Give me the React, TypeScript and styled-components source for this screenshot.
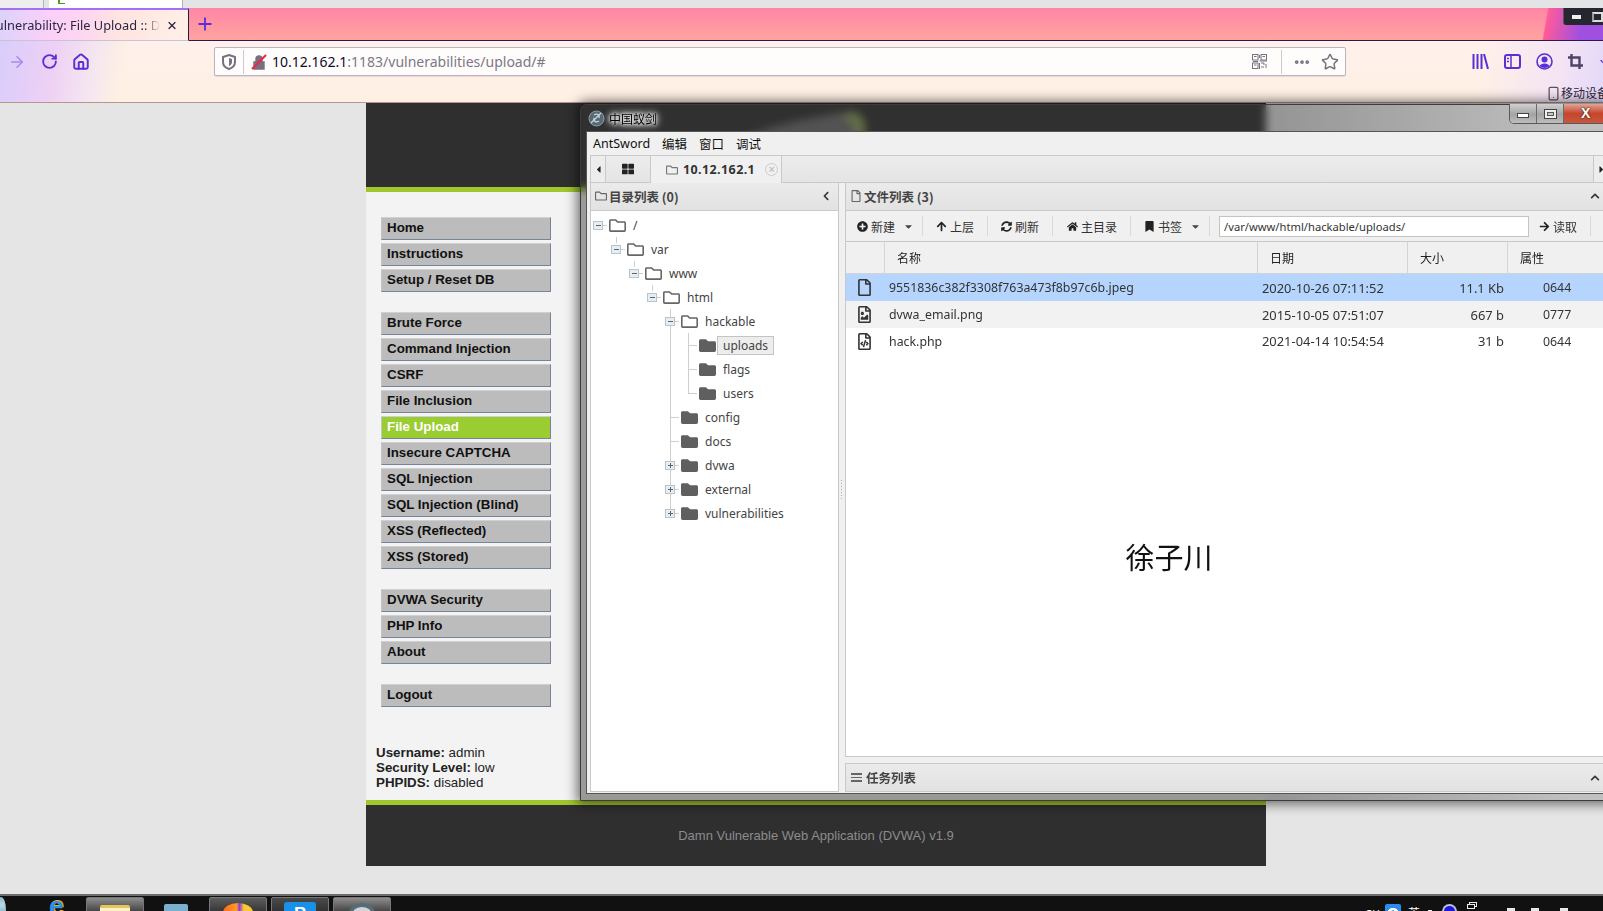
import { ReactNode } from 'react'
import styled, { createGlobalStyle } from 'styled-components'
import {
  FaArrowRight,
  FaArrowUp,
  FaBookmark,
  FaCaretDown,
  FaCaretLeft,
  FaCaretRight,
  FaChevronLeft,
  FaChevronUp,
  FaFolder,
  FaHome,
  FaPlusCircle,
  FaRegFile,
  FaRegFileCode,
  FaRegFileImage,
  FaRegFolder,
  FaSyncAlt,
  FaThLarge,
} from 'react-icons/fa'
import { ArrowRight, ChevronDown, Home, MoreHorizontal, RotateCw, Star, X, Plus, Smartphone } from 'lucide-react'

const uiFont = `"Noto Sans", "Noto Sans CJK SC", sans-serif`
const cjkFont = `"Noto Sans CJK SC", "Noto Sans", sans-serif`
const webFont = `"Liberation Sans", Arial, sans-serif`

const menuGroups = [
  ['Home', 'Instructions', 'Setup / Reset DB'],
  [
    'Brute Force',
    'Command Injection',
    'CSRF',
    'File Inclusion',
    'File Upload',
    'Insecure CAPTCHA',
    'SQL Injection',
    'SQL Injection (Blind)',
    'XSS (Reflected)',
    'XSS (Stored)',
  ],
  ['DVWA Security', 'PHP Info', 'About'],
  ['Logout'],
]

interface ITreeNode {
  name: string
  level: number
  state: 'open' | 'closed' | 'leaf'
  guides: number[]
  last?: boolean
  selected?: boolean
}

const tree: ITreeNode[] = [
  { name: '/', level: 0, state: 'open', guides: [] },
  { name: 'var', level: 1, state: 'open', guides: [] },
  { name: 'www', level: 2, state: 'open', guides: [] },
  { name: 'html', level: 3, state: 'open', guides: [] },
  { name: 'hackable', level: 4, state: 'open', guides: [4] },
  { name: 'uploads', level: 5, state: 'leaf', guides: [4, 5], selected: true },
  { name: 'flags', level: 5, state: 'leaf', guides: [4, 5] },
  { name: 'users', level: 5, state: 'leaf', guides: [4, 5], last: true },
  { name: 'config', level: 4, state: 'leaf', guides: [4] },
  { name: 'docs', level: 4, state: 'leaf', guides: [4] },
  { name: 'dvwa', level: 4, state: 'closed', guides: [4] },
  { name: 'external', level: 4, state: 'closed', guides: [4] },
  { name: 'vulnerabilities', level: 4, state: 'closed', guides: [4], last: true },
]

const files = [
  { icon: <FaRegFile />, name: '9551836c382f3308f763a473f8b97c6b.jpeg', date: '2020-10-26 07:11:52', size: '11.1 Kb', attr: '0644' },
  { icon: <FaRegFileImage />, name: 'dvwa_email.png', date: '2015-10-05 07:51:07', size: '667 b', attr: '0777' },
  { icon: <FaRegFileCode />, name: 'hack.php', date: '2021-04-14 10:54:54', size: '31 b', attr: '0644' },
]

const TreeGuide = ({ node }: { node: ITreeNode }) => {
  const cx = node.level * 18 + 9
  const width = (node.level + 1) * 18
  return (
    <svg width={width} height={24} style={{ flex: 'none' }}>
      {node.guides
        .filter((g) => g < node.level)
        .map((g) => (
          <line key={g} x1={g * 18 + 9.5} x2={g * 18 + 9.5} y1={-1} y2={24} stroke="#cfcfcf" />
        ))}
      {node.level > 0 && node.guides.includes(node.level) && (
        <line x1={cx + 0.5} x2={cx + 0.5} y1={0} y2={node.last ? 12 : 24} stroke="#cfcfcf" />
      )}
      {node.level > 0 && !node.guides.includes(node.level) && (
        <line x1={cx + 0.5} x2={cx + 0.5} y1={-4} y2={6} stroke="#cfcfcf" />
      )}
      {node.state === 'open' && node.name === 'hackable' && (
        <line x1={cx + 0.5} x2={cx + 0.5} y1={0} y2={24} stroke="#cfcfcf" />
      )}
      <line x1={cx} x2={cx + 10} y1={12.5} y2={12.5} stroke="#cfcfcf" />
      {node.state !== 'leaf' && (
        <g>
          <rect x={cx - 4.5} y={8.5} width={9} height={8} fill="#e6eef3" stroke="#b9c4cc" />
          <line x1={cx - 2} x2={cx + 3} y1={12.5} y2={12.5} stroke="#5b6770" />
          {node.state === 'closed' && <line x1={cx + 0.5} x2={cx + 0.5} y1={10} y2={15} stroke="#5b6770" />}
        </g>
      )}
    </svg>
  )
}

const ToolItem = ({ icon, children, caret }: { icon: ReactNode; children: ReactNode; caret?: boolean }) => (
  <ToolButton>
    {icon}
    <span>{children}</span>
    {caret && <CaretSlot><FaCaretDown /></CaretSlot>}
  </ToolButton>
)

const App = () => {
  return (
    <Screen>
      <GlobalStyle />
      <TopStrip>
        <OldTab $width={44} />
        <StripGap />
        <WhiteTab>
          <TabFavicon />
        </WhiteTab>
      </TopStrip>
      <TabBar>
        <ActiveTab>
          <TabTitle>Vulnerability: File Upload :: D</TabTitle>
          <X size={15} strokeWidth={2.4} color="#2a2540" />
        </ActiveTab>
        <NewTab>
          <Plus size={20} strokeWidth={2.2} color="#5b2fd6" />
        </NewTab>
        <TopRightControls>
          <MinIcon />
          <RestoreIcon />
        </TopRightControls>
      </TabBar>
      <NavBar>
        <NavIcons>
          <ArrowRight size={18} color="#a78ae8" strokeWidth={2} />
          <RotateCw size={17} color="#5b2fd6" strokeWidth={2.6} />
          <Home size={18} color="#5b2fd6" strokeWidth={2.6} />
        </NavIcons>
        <UrlBox>
          <svg width="14" height="16" viewBox="0 0 14 16">
            <path d="M7 1 L13 3 V8 C13 12 10 14 7 15 C4 14 1 12 1 8 V3 Z" fill="none" stroke="#77707f" strokeWidth="2" />
            <path d="M7 4 L10 5 V8 C10 10 8.5 11.5 7 12 Z" fill="#77707f" />
          </svg>
          <UrlDivider />
          <svg width="16" height="16" viewBox="0 0 16 16">
            <path d="M3 8 H13 V15 H3 Z M5 8 V5 C5 1 11 1 11 5 V8" fill="#77707f" stroke="#77707f" strokeWidth="1.4" />
            <line x1="1" y1="15" x2="15" y2="1" stroke="#f0244f" strokeWidth="2.2" />
          </svg>
          <UrlText>
            <b>10.12.162.1</b>:1183/vulnerabilities/upload/#
          </UrlText>
          <svg width="15" height="15" viewBox="0 0 15 15" fill="none" stroke="#77707f">
            <rect x=".5" y=".5" width="5.5" height="5.5" />
            <rect x="9" y=".5" width="5.5" height="5.5" />
            <rect x=".5" y="9" width="5.5" height="5.5" />
            <path d="M2 2.5h2.5M10.5 2.5H13M2 11h2.5M7.5 1v3M7.5 7H15M1 7.5h5M9 9h3v2M14 10v4M9 13h3M7.5 9v6" />
          </svg>
          <UrlDividerWide />
          <MoreHorizontal size={18} color="#77707f" strokeWidth={3} />
          <StarSlot>
            <Star size={18} color="#77707f" strokeWidth={2} />
          </StarSlot>
        </UrlBox>
        <NavRight>
          <ToolIcons>
            <svg width="17" height="15" viewBox="0 0 17 15" fill="none" stroke="#5b2fd6" strokeWidth="2">
              <path d="M1.500 0V15M5.500 0V15M9.500 0V15M12 0L16 15" />
            </svg>
            <svg width="17" height="15" viewBox="0 0 17 15" fill="none" stroke="#5b2fd6" strokeWidth="2">
              <rect x="1" y="1" width="15" height="13" rx="2" />
              <path d="M7 1V14M3 4.500H5M3 7.500H5" strokeWidth="1.500" />
            </svg>
            <svg width="17" height="17" viewBox="0 0 17 17">
              <circle cx="8.500" cy="8.500" r="7.500" fill="none" stroke="#5b2fd6" strokeWidth="1.600" />
              <circle cx="8.500" cy="6.500" r="3" fill="#5b2fd6" />
              <path d="M3.500 13 C5 9.500 12 9.500 13.500 13 C11 15.500 6 15.500 3.500 13Z" fill="#5b2fd6" />
            </svg>
            <svg width="15" height="15" viewBox="0 0 15 15" fill="none" stroke="#4e4468" strokeWidth="2.400">
              <path d="M3.500 0V11.500H15M0 3.500H11.500V15" />
            </svg>
            <ChevronDown size={12} color="#5b2fd6" strokeWidth={2.4} />
          </ToolIcons>
          <DeviceHint>
            <Smartphone size={15} strokeWidth={2} color="#57525e" />
            移动设备
          </DeviceHint>
        </NavRight>
      </NavBar>
      <PageArea>
        <Dvwa>
          <DvwaHeader>
            <LogoSwoosh width="150" height="30" viewBox="0 0 150 30">
              <path d="M6 30 C40 14 80 8 118 2 C128 8 126 20 124 30 Z" fill="#6e6e6e" />
              <path d="M104 8 C120 -2 134 6 128 30 L118 30 C120 20 116 12 104 8Z" fill="#8ba05a" />
            </LogoSwoosh>
          </DvwaHeader>
          <DvwaBody>
            {menuGroups.map((group) => (
              <MenuGroup key={group[0]}>
                {group.map((item) => (
                  <MenuItem key={item} $active={item === 'File Upload'}>
                    {item}
                  </MenuItem>
                ))}
              </MenuGroup>
            ))}
            <UserInfo>
              <b>Username:</b> admin
              <br />
              <b>Security Level:</b> low
              <br />
              <b>PHPIDS:</b> disabled
            </UserInfo>
          </DvwaBody>
          <DvwaFooter>Damn Vulnerable Web Application (DVWA) v1.9</DvwaFooter>
        </Dvwa>

        <Window>
          <TitleBar>
            <svg width="17" height="17" viewBox="0 0 17 17">
              <circle cx="8.500" cy="8.500" r="7.500" fill="#566a76" stroke="#8e9ca4" />
              <path d="M3 13 L13 3 M6 5 C9 3 12 5 11 8 M11 11 C8 13 5 11 6 8" fill="none" stroke="#c6d0d6" strokeWidth="1.300" />
            </svg>
            <WindowTitle>中国蚁剑</WindowTitle>
            <WindowControls>
              <ControlButton>
                <MinGlyph />
              </ControlButton>
              <ControlButton>
                <MaxGlyph />
              </ControlButton>
              <CloseButton>X</CloseButton>
            </WindowControls>
          </TitleBar>
          <WindowInner>
            <MenuBar>
              <span>AntSword</span>
              <span>编辑</span>
              <span>窗口</span>
              <span>调试</span>
            </MenuBar>
            <TabsRow>
              <TabArrow>
                <FaCaretLeft />
              </TabArrow>
              <GridTab>
                <FaThLarge />
              </GridTab>
              <HostTab>
                <FaRegFolder />
                <b>10.12.162.1</b>
                <TabClose>×</TabClose>
              </HostTab>
              <TabRest />
              <TabArrowRight>
                <FaCaretRight />
              </TabArrowRight>
            </TabsRow>
            <Panels>
              <LeftPanel>
                <PanelHead>
                  <FaRegFolder />
                  <PanelTitle>目录列表 (0)</PanelTitle>
                  <HeadChevron>
                    <FaChevronLeft />
                  </HeadChevron>
                </PanelHead>
                <TreeBody>
                  {tree.map((node) => (
                    <TreeRow key={node.name}>
                      <TreeGuide node={node} />
                      <FolderSlot $open={node.level < 5 && node.state === 'open'}>
                        {node.state === 'open' ? <FaRegFolder /> : <FaFolder />}
                      </FolderSlot>
                      <TreeLabel $selected={node.selected}>{node.name}</TreeLabel>
                    </TreeRow>
                  ))}
                </TreeBody>
              </LeftPanel>
              <Splitter />
              <RightColumn>
                <RightPanel>
                  <PanelHead>
                    <FaRegFile />
                    <PanelTitle>文件列表 (3)</PanelTitle>
                    <HeadChevron>
                      <FaChevronUp />
                    </HeadChevron>
                  </PanelHead>
                  <Toolbar>
                    <ToolItem icon={<FaPlusCircle />} caret>新建</ToolItem>
                    <ToolSep />
                    <ToolItem icon={<FaArrowUp />}>上层</ToolItem>
                    <ToolSep />
                    <ToolItem icon={<FaSyncAlt />}>刷新</ToolItem>
                    <ToolSep />
                    <HomeTool>
                      <ToolItem icon={<FaHome />}>主目录</ToolItem>
                    </HomeTool>
                    <ToolSep />
                    <ToolItem icon={<FaBookmark />} caret>书签</ToolItem>
                    <ToolSep />
                    <PathInput>/var/www/html/hackable/uploads/</PathInput>
                    <ToolItem icon={<FaArrowRight />}>读取</ToolItem>
                    <ToolSep />
                  </Toolbar>
                  <FileHead>
                    <HeadCell />
                    <HeadCell>名称</HeadCell>
                    <HeadCell>日期</HeadCell>
                    <HeadCell>大小</HeadCell>
                    <HeadCell>属性</HeadCell>
                  </FileHead>
                  {files.map((f, i) => (
                    <FileRow key={f.name} $tone={i}>
                      <FileIcon>{f.icon}</FileIcon>
                      <FileCell>{f.name}</FileCell>
                      <DateCell>{f.date}</DateCell>
                      <SizeCell>{f.size}</SizeCell>
                      <AttrCell>{f.attr}</AttrCell>
                    </FileRow>
                  ))}
                  <FileBlank>
                    <Watermark>徐子川</Watermark>
                  </FileBlank>
                </RightPanel>
                <TaskPanel>
                  <TaskIcon />
                  <PanelTitle>任务列表</PanelTitle>
                  <HeadChevron>
                    <FaChevronUp />
                  </HeadChevron>
                </TaskPanel>
              </RightColumn>
            </Panels>
          </WindowInner>
        </Window>
      </PageArea>
      <Taskbar>
        <StartOrb />
        <IeGlyph>e</IeGlyph>
        <TaskButton $left={9} $tone="#8d8d8d">
          <FolderGlyph />
        </TaskButton>
        <TaskButton $left={3} $tone="transparent">
          <MediaGlyph />
        </TaskButton>
        <TaskButton $left={4} $tone="#5c5c5c">
          <FoxGlyph />
        </TaskButton>
        <TaskButton $left={4} $tone="#4a4a4a">
          <PGlyph>P</PGlyph>
        </TaskButton>
        <TaskButton $left={4} $tone="#8d8d8d">
          <AntGlyph />
        </TaskButton>
        <Tray>
          <TrayText>CH</TrayText>
          <TrayBlue />
          <TrayLang>英</TrayLang>
          <TrayDot />
          <TrayHelp />
          <TrayWindows />
          <TrayBar $left={32} />
          <TrayBar $left={16} />
          <TrayBar $left={21} />
        </Tray>
      </Taskbar>
    </Screen>
  )
}

const GlobalStyle = createGlobalStyle`
  html, body { margin: 0; padding: 0; background: #e5e5e5; }
  * { box-sizing: border-box; }
`
const Screen = styled.div`
  width: 1603px;
  height: 911px;
  overflow: hidden;
  display: flex;
  flex-direction: column;
  font-family: ${uiFont};
`
const TopStrip = styled.div`
  height: 8px;
  background: #e3e4e6;
  display: flex;
`
const OldTab = styled.div<{ $width: number }>`
  width: ${(p) => p.$width}px;
  background: #eeeeee;
  border-right: 1px solid #b5b5b5;
`
const StripGap = styled.div`
  width: 5px;
`
const WhiteTab = styled.div`
  width: 134px;
  background: #fff;
  border-right: 1px solid #b5b5b5;
  padding-left: 9px;
`
const TabFavicon = styled.div`
  width: 7px;
  height: 4px;
  border-left: 2px solid #4f9a2e;
  border-bottom: 1px solid #4f9a2e;
`
const TabBar = styled.div`
  height: 33px;
  display: flex;
  border-bottom: 1px solid #2a1a4a;
  background:
    linear-gradient(100deg, transparent 96.200%, #ff5a9a 96.300%, #a050e0 98.500%) ,
    linear-gradient(180deg, #ff86a6 0%, #ffa39f 100%);
`
const ActiveTab = styled.div`
  width: 189px;
  height: 33px;
  flex: none;
  display: flex;
  align-items: center;
  justify-content: flex-end;
  gap: 6px;
  padding-right: 10px;
  border-top: 2px solid #a36ff5;
  border-right: 1px solid #2a1a4a;
  border-bottom: 1px solid #c9c3d6;
  background:
    linear-gradient(100deg, #dcd2fb 0%, #fcd0f8 28%, #fdd6f0 45%, #ffe4e2 62%, #fff0e6 100%);
`
const TabTitle = styled.div`
  width: 160px;
  flex: none;
  overflow: hidden;
  white-space: nowrap;
  direction: rtl;
  text-align: left;
  font-size: 12.800px;
  color: #2a2540;
  -webkit-mask-image: linear-gradient(90deg, #000 90%, transparent 100%);
  mask-image: linear-gradient(90deg, #000 90%, transparent 100%);
`
const NewTab = styled.div`
  width: 32px;
  display: flex;
  align-items: center;
  justify-content: center;
`
const TopRightControls = styled.div`
  margin-left: auto;
  width: 40px;
  height: 17px;
  background: #262630;
  border-radius: 0 0 0 3px;
  border-left: 1px solid #555;
  display: flex;
  align-items: center;
  gap: 11px;
  padding-left: 8px;
`
const MinIcon = styled.div`
  width: 11px;
  height: 4px;
  background: #eee;
`
const RestoreIcon = styled.div`
  width: 12px;
  height: 10px;
  border: 2px solid #ddd;
  border-left-color: #999;
`
const NavBar = styled.div`
  height: 62px;
  display: flex;
  padding: 6px 0 0;
  border-bottom: 1px solid #b8958f;
  background:
    linear-gradient(100deg, #d8cdfb 0%, #eed0f5 3.500%, #f4e6f0 6%, #fff0e4 8%, transparent 8.100%),
    linear-gradient(100deg, transparent 92%, #f4e4f4 97%, #e2d8f8 100%),
    linear-gradient(180deg, #fff0ec 0%, #fff0e3 100%);
`
const NavIcons = styled.div`
  width: 214px;
  height: 29px;
  flex: none;
  display: flex;
  align-items: center;
  gap: 15px;
  padding: 0 0 0 8px;

  svg:nth-child(3) {
    margin-left: -1px;
  }
`
const UrlBox = styled.div`
  width: 1132px;
  height: 29px;
  flex: none;
  display: flex;
  align-items: center;
  padding: 0 6px 0 7px;
  background: #fffdfb;
  border: 1px solid #bdb3c2;
  border-radius: 2px;
  box-shadow: 0 1px 1px rgba(60, 40, 80, 0.12);
`
const UrlDivider = styled.div`
  width: 1px;
  height: 24px;
  background: #cfc8d2;
  margin: 0 7px 0 7px;
`
const UrlText = styled.div`
  flex: 1;
  margin-left: 5px;
  font-size: 14px;
  color: #7d7788;
  white-space: nowrap;

  b {
    font-weight: 400;
    color: #120a2c;
  }
`
const UrlDividerWide = styled(UrlDivider)`
  margin: 0 11px 0 14px;
`
const StarSlot = styled.div`
  display: flex;
  margin-left: 10px;
`
const NavRight = styled.div`
  margin-left: 126px;
  flex: none;
  display: flex;
  flex-direction: column;
`
const ToolIcons = styled.div`
  height: 29px;
  display: flex;
  align-items: center;
  gap: 15px;
`
const DeviceHint = styled.div`
  margin: 9px 0 0 74px;
  display: flex;
  align-items: center;
  font-size: 12px;
  line-height: 16px;
  color: #2c2438;
  white-space: nowrap;
  font-family: ${cjkFont};
`
const PageArea = styled.div`
  flex: 1;
  min-height: 0;
  position: relative;
  background: #e5e5e5;
  padding-left: 366px;
`
const Dvwa = styled.div`
  width: 900px;
`
const DvwaHeader = styled.div`
  height: 89px;
  background: #2f2f2f;
  border-bottom: 5px solid #9fc62c;
  position: relative;
  overflow: hidden;
`
const LogoSwoosh = styled.svg`
  position: absolute;
  left: 370px;
  top: 6px;
`
const DvwaBody = styled.div`
  height: 608px;
  background: #f3f3f3;
  padding: 25px 0 0 15px;
  font-family: ${webFont};
`
const MenuGroup = styled.div`
  display: flex;
  flex-direction: column;
  gap: 3px;
  margin-bottom: 20px;
`
const MenuItem = styled.div<{ $active?: boolean }>`
  width: 170px;
  height: 23px;
  padding-left: 5px;
  font-size: 13.330px;
  font-weight: 700;
  line-height: 20px;
  color: ${(p) => (p.$active ? '#fff' : '#111')};
  background: ${(p) => (p.$active ? '#9acd32' : '#bcbcbc')};
  border-top: 1px solid #d0d0d0;
  border-left: 1px solid #c4c4c4;
  border-right: 1px solid #75839c;
  border-bottom: 1px solid #75839c;
`
const UserInfo = styled.div`
  margin: 38px 0 0 -5px;
  font-size: 13.330px;
  line-height: 15.200px;
  color: #222;
`
const DvwaFooter = styled.div`
  height: 66px;
  padding-top: 23px;
  background: #2f2f2f;
  border-top: 5px solid #9fc62c;
  text-align: center;
  font-family: ${webFont};
  font-size: 13px;
  color: #8c8c8c;
`
const Window = styled.div`
  position: absolute;
  left: 580px;
  top: 1px;
  width: 1035px;
  height: 697px;
  display: flex;
  flex-direction: column;
  padding: 0 6px 6px 5px;
  border: 1px solid #3c3c3c;
  border-radius: 7px 7px 0 0;
  background: linear-gradient(90deg, rgba(50, 50, 50, 0.454) 0%, rgba(50, 50, 50, 0.454) 66%, rgba(84, 84, 84, 0.25) 96%);
  backdrop-filter: blur(4px);
  box-shadow: 0 0 12px 3px rgba(0, 0, 0, 0.55);
`
const TitleBar = styled.div`
  height: 26px;
  flex: none;
  display: flex;
  align-items: center;
  gap: 4px;
  padding-left: 2px;
  position: relative;
`
const WindowTitle = styled.div`
  font-family: ${cjkFont};
  font-size: 12px;
  color: #000;
  text-shadow: 0 0 10px #fff, 0 0 8px #fff, 0 0 5px #fff, 0 0 3px #fff;
`
const WindowControls = styled.div`
  position: absolute;
  left: 923px;
  top: -1px;
  height: 20px;
  display: flex;
  border: 1px solid #5a5a5a;
  border-top: none;
  border-radius: 0 0 5px 5px;
  overflow: hidden;
`
const ControlButton = styled.div`
  width: 27px;
  display: flex;
  align-items: center;
  justify-content: center;
  background: linear-gradient(180deg, #d0d0d0 0%, #a4a4a4 55%, #bdbdbd 100%);
  border-right: 1px solid #6a6a6a;
`
const MinGlyph = styled.div`
  width: 12px;
  height: 5px;
  margin-top: 4px;
  background: #fff;
  border: 1px solid #444;
`
const MaxGlyph = styled.div`
  width: 13px;
  height: 10px;
  background: #c8c8c8;
  border: 1px solid #444;
  box-shadow: inset 0 0 0 2px #eee, inset 0 0 0 3px #555;
`
const CloseButton = styled.div`
  width: 46px;
  padding-left: 17px;
  font: 700 14px/19px ${webFont};
  color: #fff;
  text-shadow: 0 0 2px #000;
  background: linear-gradient(180deg, #e0a598 0%, #c6452c 50%, #c8573d 100%);
`
const WindowInner = styled.div`
  flex: 1;
  min-height: 0;
  display: flex;
  flex-direction: column;
  background: #f0f0f0;
  border: 1px solid #555;
  border-width: 1px 0 1px 1px;
  font-size: 12.500px;
  color: #222;
`
const MenuBar = styled.div`
  height: 23px;
  flex: none;
  display: flex;
  align-items: center;
  gap: 12px;
  padding-left: 6px;
  font-family: ${uiFont};
  font-size: 12.500px;
  color: #111;
  background: #f0f0f0;
`
const TabsRow = styled.div`
  height: 28px;
  flex: none;
  display: flex;
  margin: 0 0 0 3px;
  border-top: 1px solid #c9c9c9;
  border-left: 1px solid #c9c9c9;
`
const TabArrow = styled.div`
  width: 15px;
  display: flex;
  align-items: center;
  justify-content: center;
  font-size: 11px;
  color: #222;
  background: #ededed;
  border-right: 1px solid #c9c9c9;
  border-bottom: 1px solid #c9c9c9;
`
const GridTab = styled(TabArrow)`
  width: 45px;
  font-size: 12px;
  background: linear-gradient(180deg, #ececec, #e4e4e4);
`
const HostTab = styled.div`
  width: 131px;
  display: flex;
  align-items: center;
  gap: 5px;
  padding-left: 15px;
  font-size: 12.500px;
  color: #333;
  background: #f0f0f0;
  border-right: 1px solid #c9c9c9;

  svg {
    color: #777;
    font-size: 12px;
  }
  b {
    letter-spacing: 0.400px;
  }
`
const TabClose = styled.span`
  width: 13px;
  height: 13px;
  margin-left: 5px;
  border-radius: 50%;
  border: 1px solid #ccc;
  color: #c4c4c4;
  font: 700 11px/10px ${webFont};
  text-align: center;
`
const TabRest = styled.div`
  flex: 1;
  background: linear-gradient(180deg, #ececec, #e4e4e4);
  border-bottom: 1px solid #c9c9c9;
`
const TabArrowRight = styled(TabArrow)`
  border-right: none;
  border-left: 1px solid #c9c9c9;
`
const Panels = styled.div`
  flex: 1;
  min-height: 0;
  display: flex;
  padding: 0 0 1px 3px;
`
const LeftPanel = styled.div`
  width: 249px;
  flex: none;
  display: flex;
  flex-direction: column;
  border: 1px solid #c9c9c9;
  border-top: none;
  background: #fff;
`
const Splitter = styled.div`
  width: 6px;
  flex: none;
  background: repeating-linear-gradient(#b4b4b4 0 1px, transparent 1px 3px) 2px 297px / 1px 21px no-repeat;
`
const RightColumn = styled.div`
  flex: 1;
  min-width: 0;
  display: flex;
  flex-direction: column;
  gap: 6px;
`
const RightPanel = styled.div`
  flex: 1;
  min-height: 0;
  display: flex;
  flex-direction: column;
  background: #fff;
  border: 1px solid #c9c9c9;
  border-top: none;
`
const PanelHead = styled.div`
  height: 28px;
  flex: none;
  display: flex;
  align-items: center;
  gap: 2px;
  padding: 0 7px 1px 4px;
  background: linear-gradient(180deg, #ebebeb, #e2e2e2);
  border-bottom: 1px solid #c9c9c9;

  & > svg {
    font-size: 12px;
    color: #666;
  }
`
const PanelTitle = styled.div`
  font-family: ${cjkFont};
  font-size: 12.500px;
  font-weight: 700;
  color: #444;
`
const HeadChevron = styled.div`
  margin-left: auto;
  display: flex;
  font-size: 10px;
  color: #333;
`
const TreeBody = styled.div`
  flex: 1;
  padding-top: 2px;
  background: #fff;
`
const TreeRow = styled.div`
  height: 24px;
  display: flex;
  align-items: center;
  white-space: nowrap;
  margin-left: -2px;
`
const FolderSlot = styled.div<{ $open: boolean }>`
  width: 17px;
  margin-left: 2px;
  flex: none;
  display: flex;
  font-size: 17px;
  color: ${(p) => (p.$open ? '#666' : '#5f5f5f')};
`
const TreeLabel = styled.div<{ $selected?: boolean }>`
  margin-left: 1px;
  height: 19px;
  padding: 0 5px 0 5px;
  line-height: 17px;
  font-size: 12px;
  color: #444;
  border: 1px solid ${(p) => (p.$selected ? '#c4c4c4' : 'transparent')};
  background: ${(p) => (p.$selected ? '#ededed' : 'transparent')};
`
const Toolbar = styled.div`
  height: 31px;
  flex: none;
  display: flex;
  align-items: center;
  padding-left: 11px;
  background: #f0f0f0;
  border-bottom: 1px solid #c9c9c9;
`
const ToolButton = styled.div`
  display: flex;
  align-items: center;
  gap: 3px;
  font-family: ${cjkFont};
  font-size: 12px;
  color: #333;
  white-space: nowrap;

  & > svg {
    font-size: 11px;
    color: #222;
  }
`
const HomeTool = styled.div`
  margin-left: 1px;
`
const CaretSlot = styled.span`
  display: flex;
  margin: 0 -5px 0 5px;
  font-size: 11px;
  color: #444;
`
const ToolSep = styled.div`
  width: 1px;
  height: 20px;
  margin: 0 13px;
  background: #d2dce0;
`
const PathInput = styled.div`
  width: 310px;
  height: 21px;
  margin: 0 10px 0 -4px;
  padding-left: 4px;
  background: #fff;
  border: 1px solid #c4c4c4;
  font-size: 11.200px;
  line-height: 19px;
  color: #333;
`
const fileColumns = '39px 373px 150px 100px 120px'
const FileHead = styled.div`
  height: 32px;
  flex: none;
  display: grid;
  grid-template-columns: ${fileColumns};
  background: #f0f0f0;
`
const HeadCell = styled.div`
  padding: 7px 0 0 12px;
  font-family: ${cjkFont};
  font-size: 12px;
  color: #222;
  border-right: 1px solid #d4d4d4;
  border-bottom: 1px solid #d4d4d4;
`
const toneColors = ['#b5d5ff', '#f2f2f2', '#ffffff']
const FileRow = styled.div<{ $tone: number }>`
  height: ${(p) => (p.$tone === 2 ? 26 : 27)}px;
  flex: none;
  display: grid;
  grid-template-columns: ${fileColumns};
  background: ${(p) => toneColors[p.$tone]};
  align-items: center;
  color: #333;
  font-size: 12.350px;
`
const FileIcon = styled.div`
  display: flex;
  justify-content: center;
  padding-right: 2px;
  font-size: 17px;
  color: #333;
`
const FileCell = styled.div`
  padding-left: 4px;
  white-space: nowrap;
`
const DateCell = styled(FileCell)`
  font-size: 12.900px;
`
const SizeCell = styled.div`
  padding-right: 4px;
  font-size: 12.900px;
  text-align: right;
`
const AttrCell = styled.div`
  padding-left: 35px;
`
const FileBlank = styled.div`
  flex: 1;
  display: flex;
  flex-direction: column;
  align-items: center;
  padding: 182px 0 0;
  width: 642px;
`
const Watermark = styled.div`
  font-family: ${cjkFont};
  font-size: 29px;
  line-height: 40px;
  color: #111;
  margin-left: 4px;
`
const TaskPanel = styled.div`
  height: 29px;
  flex: none;
  display: flex;
  align-items: center;
  gap: 4px;
  padding: 0 7px 0 5px;
  background: linear-gradient(180deg, #ebebeb, #e2e2e2);
  border: 1px solid #c9c9c9;
`
const TaskIcon = styled.div`
  width: 11px;
  height: 9px;
  border-top: 2px solid #666;
  border-bottom: 2px solid #666;
  background: linear-gradient(#666, #666) center / 100% 1px no-repeat;
`
const Taskbar = styled.div`
  height: 17px;
  flex: none;
  display: flex;
  align-items: flex-start;
  background: #111;
  border-top: 2px solid #6c6c6c;
  overflow: hidden;
  padding-top: 1px;
`
const StartOrb = styled.div`
  width: 10px;
  height: 26px;
  margin-left: -4px;
  flex: none;
  border-radius: 50%;
  background: radial-gradient(circle at 60% 30%, #bde, #4a7d8c);
`
const IeGlyph = styled.div`
  width: 28px;
  margin-left: 43px;
  flex: none;
  font: 700 26px/18px ${webFont};
  color: #2f8fe0;
  text-shadow: 1px -1px 0 #e8b030;
`
const TaskButton = styled.div<{ $left: number; $tone: string }>`
  width: 58px;
  height: 20px;
  margin-left: ${(p) => p.$left}px;
  flex: none;
  display: flex;
  justify-content: center;
  padding-top: 5px;
  border-radius: 2px 2px 0 0;
  border: 1px solid ${(p) => (p.$tone === 'transparent' ? 'transparent' : '#777')};
  background: ${(p) => (p.$tone === 'transparent' ? 'transparent' : `linear-gradient(180deg, ${p.$tone}, #2a2a2a)`)};
`
const FolderGlyph = styled.div`
  width: 30px;
  height: 18px;
  margin-top: 2px;
  border-radius: 2px;
  background: linear-gradient(180deg, #fff6c8, #e8d080);
  border-top: 3px solid #e6c35c;
`
const MediaGlyph = styled.div`
  width: 24px;
  height: 18px;
  margin-top: 1px;
  border-radius: 2px;
  background: radial-gradient(circle at 50% 100%, #f0781e 0 8px, #7ab0cf 9px);
`
const FoxGlyph = styled.div`
  width: 30px;
  height: 18px;
  border-radius: 50% 50% 0 0;
  background: linear-gradient(90deg, #ff6a1e 0%, #ff9a24 45%, #8f3fd8 55%, #ffca30 70%);
`
const PGlyph = styled.div`
  width: 32px;
  height: 18px;
  margin-top: -1px;
  border-radius: 3px;
  background: #1a90e8;
  color: #fff;
  font: 700 18px/24px ${webFont};
  text-align: center;
`
const AntGlyph = styled.div`
  width: 26px;
  height: 20px;
  border-radius: 50%;
  border: 4px solid #566b78;
  background: #d4d4d4;
`
const Tray = styled.div`
  margin: 7px 0 0 auto;
  width: 238px;
  flex: none;
  display: flex;
  align-items: flex-start;
`
const TrayText = styled.div`
  margin-top: 3px;
  font-family: ${cjkFont};
  font-size: 11px;
  line-height: 12px;
  color: #fff;
`
const TrayBlue = styled.div`
  width: 16px;
  height: 16px;
  margin-left: 5px;
  border-radius: 2px;
  background: radial-gradient(circle at 50% 60%, #1e90ff 0 3px, #fff 3.500px 5.500px, #2a8cf0 6px);
`
const TrayLang = styled(TrayText)`
  margin-left: 7px;
  font-size: 12px;
`
const TrayDot = styled.div`
  width: 4px;
  height: 3px;
  margin: 6px 0 0 8px;
  background: #eee;
`
const TrayHelp = styled.div`
  width: 15px;
  height: 15px;
  margin-left: 10px;
  border-radius: 50%;
  background: radial-gradient(circle, #1a1ad8 0 5px, #c0c0d8 6px);
`
const TrayWindows = styled.div`
  width: 8px;
  height: 5px;
  margin: 0 0 0 10px;
  border: 1px solid #eee;
  box-shadow: 2px -2px 0 -1px #111, 2px -2px 0 0 #eee;
`
const TrayBar = styled.div<{ $left: number }>`
  width: 8px;
  height: 4px;
  margin: 4px 0 0 ${(p) => p.$left}px;
  background: #e8e8e8;
`

export default App
